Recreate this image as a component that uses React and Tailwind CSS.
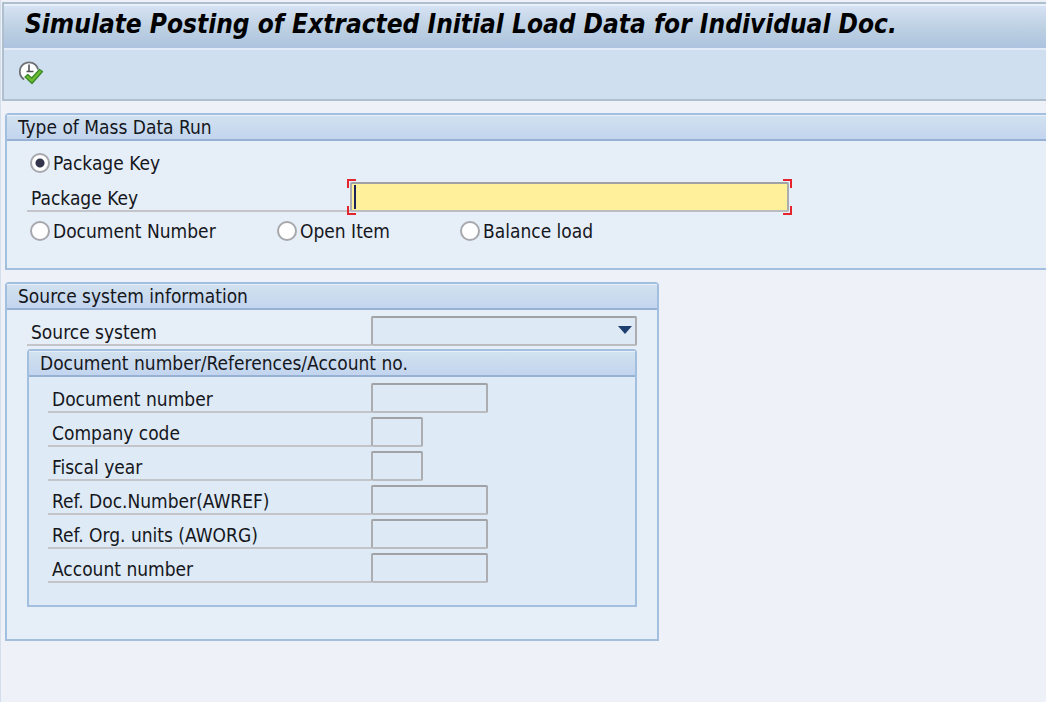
import React from "react";

const fieldStyle =
  "h-[30px] rounded-xs border-2 border-t-[#a0a2a5] border-x-[#abadb1] border-b-[#bbbcbf] outline-none";

const documentFields = [
  { id: "document-number", label: "Document number", width: "w-[117px]" },
  { id: "company-code", label: "Company code", width: "w-[52px]" },
  { id: "fiscal-year", label: "Fiscal year", width: "w-[52px]" },
  { id: "ref-doc-number", label: "Ref. Doc.Number(AWREF)", width: "w-[117px]" },
  { id: "ref-org-units", label: "Ref. Org. units (AWORG)", width: "w-[117px]" },
  { id: "account-number", label: "Account number", width: "w-[117px]" },
];

function Group({ title, className, children }) {
  return (
    <section className={`border-2 border-[#a3bfe0] ${className}`}>
      <h2 className="flex h-[26px] items-center border-b-2 border-[#96b1d4] bg-linear-to-b from-[#d2e2ef] to-[#c3d5ef] px-[11px] shadow-[inset_0_1px_0_#e6effa]">
        {title}
      </h2>
      {children}
    </section>
  );
}

function FieldLabel({ htmlFor, className, children }) {
  return (
    <label
      htmlFor={htmlFor}
      className={`flex h-[30px] shrink-0 items-center border-b-2 border-[#c3c5ca] pt-[3px] pl-1 ${className}`}
    >
      {children}
    </label>
  );
}

function RunType({ label, className, ...props }) {
  return (
    <label className={`flex items-center gap-[3px] ${className}`}>
      <input
        type="radio"
        name="run-type"
        className="size-5 appearance-none rounded-full border-2 border-[#a6a8ad] bg-white checked:bg-[radial-gradient(circle,#33354d_0_4px,#ffffff_5px)]"
        {...props}
      />
      {label}
    </label>
  );
}

function Corner({ className }) {
  return <span className={`pointer-events-none absolute size-[9px] border-[#e5252d] ${className}`} />;
}

function ExecuteIcon() {
  return (
    <svg viewBox="0 0 26 26" className="size-[26px]" aria-hidden="true">
      <circle cx="11" cy="11" r="9.2" fill="#fff" />
      <path d="M6.2 19.4A9.2 9.2 0 1 1 20 9.5" fill="none" stroke="#6d7075" strokeWidth="1.8" />
      <path d="M11 4.5V12M8.5 11.5H15.5" fill="none" stroke="#4e5257" strokeWidth="1.6" />
      <path d="M7 17 9.8 14.6 13.7 18 21.5 9.5 24.5 11.5 14 23.5Z" fill="#6cbb33" stroke="#3b8a2a" strokeWidth="1.3" strokeLinejoin="round" />
    </svg>
  );
}

export default function App() {
  return (
    <div className="min-h-screen border-l border-[#d5deeb] bg-[#eef1f7] pt-[2px] font-['DejaVu_Sans_Condensed','DejaVu_Sans',sans-serif] text-[19px]/6 text-[#15171c]">
      <header className="ml-px border-y-2 border-l-2 border-[#b0bfce] bg-[#cfdff0]">
        <h1 className="flex h-[44px] items-center border-t-2 border-[#e8f0fb] bg-linear-to-b from-[#d6e2f3] via-[#bed1e3] to-[#adc3df] pb-[6px] pl-[21px] text-[26px] font-bold whitespace-nowrap text-black italic">
          Simulate Posting of Extracted Initial Load Data for Individual Doc.
        </h1>
        <div className="flex h-[51px] items-center border-t-2 border-[#e2ebf7] pb-1 pl-[14px]">
          <button type="button" aria-label="Execute">
            <ExecuteIcon />
          </button>
        </div>
      </header>

      <main className="pt-3 pl-1">
        <Group title="Type of Mass Data Run" className="rounded-tl-[4px] border-r-0 bg-[#e6eef8]">
          <div className="pt-[5px] pb-5 pl-5">
            <div className="flex h-[34px] items-center pl-[3px]">
              <RunType label="Package Key" defaultChecked />
            </div>
            <div className="flex h-[34px] items-center">
              <FieldLabel htmlFor="package-key" className="w-[323px]">
                Package Key
              </FieldLabel>
              <div className="relative">
                <input
                  id="package-key"
                  type="text"
                  className={`block w-[439px] bg-[#fff09c] px-2 ${fieldStyle}`}
                />
                <span className="pointer-events-none absolute top-[3px] left-1 h-6 w-[2px] bg-[#1b2358]" />
                <Corner className="-top-[3px] -left-[3px] border-t-2 border-l-2" />
                <Corner className="-top-[3px] -right-[3px] border-t-2 border-r-2" />
                <Corner className="-bottom-[3px] -left-[3px] border-b-2 border-l-2" />
                <Corner className="-right-[3px] -bottom-[3px] border-r-2 border-b-2" />
              </div>
            </div>
            <div className="flex h-[34px] items-center pl-[3px]">
              <RunType label="Document Number" className="w-[247px]" />
              <RunType label="Open Item" className="w-[183px]" />
              <RunType label="Balance load" />
            </div>
          </div>
        </Group>

        <Group
          title="Source system information"
          className="mt-3 max-w-[654px] rounded-t-[4px] bg-[#e6eef8]"
        >
          <div className="px-5 pt-[6px] pb-8">
            <div className="flex">
              <FieldLabel htmlFor="source-system" className="w-[344px]">
                Source system
              </FieldLabel>
              <div className="relative flex-1">
                <select
                  id="source-system"
                  className={`block w-full appearance-none bg-[#dee9f6] px-2 ${fieldStyle}`}
                />
                <svg
                  viewBox="0 0 14 8"
                  className="pointer-events-none absolute top-[10px] right-[5px] h-2 w-[14px]"
                  aria-hidden="true"
                >
                  <path d="M0 0H14L7 8Z" fill="#1f3e70" />
                </svg>
              </div>
            </div>
            <Group
              title="Document number/References/Account no."
              className="mt-[3px] rounded-t-[4px] bg-[#deeaf6]"
            >
              <div className="flex flex-col gap-1 pt-[6px] pb-[22px] pl-[19px]">
                {documentFields.map((field) => (
                  <div key={field.id} className="flex">
                    <FieldLabel htmlFor={field.id} className="w-[323px]">
                      {field.label}
                    </FieldLabel>
                    <input
                      id={field.id}
                      type="text"
                      className={`bg-[#dee9f6] px-2 ${field.width} ${fieldStyle}`}
                    />
                  </div>
                ))}
              </div>
            </Group>
          </div>
        </Group>
      </main>
    </div>
  );
}
